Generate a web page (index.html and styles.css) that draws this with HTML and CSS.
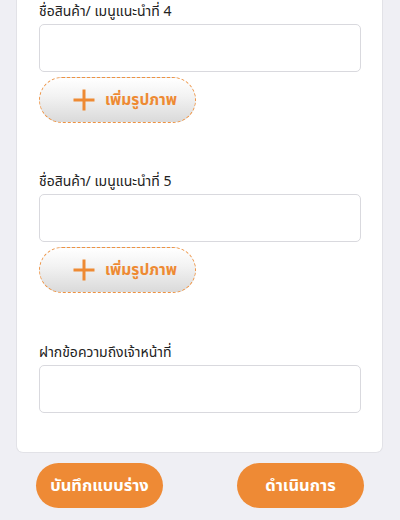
FILE: index.html
```html
<!DOCTYPE html>
<html lang="th">
<head>
<meta charset="utf-8">
<title>Form</title>
<link rel="stylesheet" href="styles.css">
</head>
<body>
<div class="card">
  <div class="group">
    <label class="label">ชื่อสินค้า/ เมนูแนะนำที่ 4</label>
    <div class="input"></div>
    <button class="add-btn" type="button">
      <svg class="plus" width="24" height="24" viewBox="0 0 24 24"><path d="M12 1.5v21M1.5 12h21" stroke="#ee8a33" stroke-width="3" fill="none"/></svg>
      <span>เพิ่มรูปภาพ</span>
    </button>
  </div>
  <div class="group">
    <label class="label">ชื่อสินค้า/ เมนูแนะนำที่ 5</label>
    <div class="input"></div>
    <button class="add-btn" type="button">
      <svg class="plus" width="24" height="24" viewBox="0 0 24 24"><path d="M12 1.5v21M1.5 12h21" stroke="#ee8a33" stroke-width="3" fill="none"/></svg>
      <span>เพิ่มรูปภาพ</span>
    </button>
  </div>
  <div class="group group-last">
    <label class="label">ฝากข้อความถึงเจ้าหน้าที่</label>
    <div class="input"></div>
  </div>
</div>
<div class="actions">
  <button class="action" type="button">บันทึกแบบร่าง</button>
  <button class="action" type="button">ดำเนินการ</button>
</div>
</body>
</html>
```
FILE: styles.css
```css
html, body {
  margin: 0;
  padding: 0;
}
body {
  background: #efeff4;
  font-family: "Noto Sans Thai", "Noto Sans", "DejaVu Sans", sans-serif;
  color: #1a1a1a;
  width: 400px;
  height: 520px;
  overflow: hidden;
}
.card {
  margin: 0 17px 0 16px;
  background: #fff;
  border: 1px solid #e2e2e7;
  border-top: none;
  border-radius: 0 0 7px 7px;
  padding: 2px 21px 39px 22px;
  display: flex;
  flex-direction: column;
  gap: 49px;
}
.group {
  display: flex;
  flex-direction: column;
}
.group-last {
  margin-top: 1px;
}
.label {
  font-size: 14px;
  line-height: 20px;
  margin-bottom: 2px;
  color: #222;
}
.input {
  height: 48px;
  box-sizing: border-box;
  border: 1.5px solid #d9d9de;
  border-radius: 5px;
  background: #fff;
}
.add-btn {
  margin-top: 5px;
  width: 157px;
  height: 46px;
  box-sizing: border-box;
  border: 1.5px dashed #ee9241;
  border-radius: 23px;
  background: linear-gradient(#ffffff, #f3f3f3 40%, #dadada);
  display: flex;
  align-items: center;
  padding: 0 0 0 32px;
  gap: 9px;
  font-family: inherit;
  font-size: 15.5px;
  font-weight: 700;
  color: #ee8a33;
}
.plus {
  flex: none;
}
.actions {
  display: flex;
  justify-content: space-between;
  padding: 10px 36px 0 36px;
}
.action {
  width: 127px;
  height: 45px;
  border: none;
  border-radius: 23px;
  background: #ee8a35;
  color: #fff;
  font-family: inherit;
  font-size: 16.5px;
  font-weight: 700;
  padding: 0;
}
```
